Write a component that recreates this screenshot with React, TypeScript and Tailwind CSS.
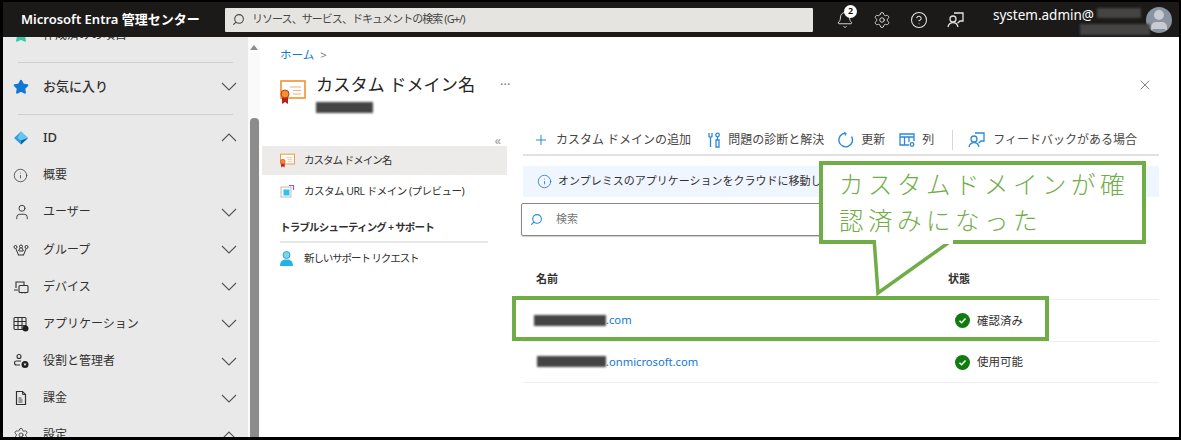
import { Bell, CircleHelp, Info, Plus, Search, Settings, Star, User, X } from "lucide-react";
import type { ReactNode } from "react";

const GREEN = "border-[#70ad47]";

function Cert({ size }: { size: number }) {
  return (
    <svg width={size} height={size} viewBox="0 0 26 26" className="shrink-0">
      <rect x="1" y="2" width="24" height="17" fill="#fff" stroke="#f2912e" strokeWidth="1.6" />
      <path d="M10 8h11M13 11.5h8M13 15h8" stroke="#f2b27a" strokeWidth="1.2" />
      <path d="M2 18v7l3-2 3 2v-7z" fill="#b3201d" />
      <circle cx="5" cy="15" r="4" fill="#f2912e" stroke="#c8391f" strokeWidth="1" />
    </svg>
  );
}

function Feedback({ color, size = 18 }: { color: string; size?: number }) {
  return (
    <svg width={size} height={size} viewBox="0 0 18 18" fill="none" stroke={color} strokeWidth="1.3" className="shrink-0">
      <path d="M7 2h9v8h-3l-2.5 2.2" />
      <circle cx="6" cy="8" r="3" />
      <path d="M1 16c.6-3 2.4-4.4 5-4.4s4.400 1.400 5 4.400" />
    </svg>
  );
}

function Chevron({ up }: { up?: boolean }) {
  return (
    <svg width="16" height="9" viewBox="0 0 16 9" fill="none" stroke="#555" strokeWidth="1.100" className="shrink-0">
      <path d={up ? "M1 8l7-7 7 7" : "M1 1l7 7 7-7"} />
    </svg>
  );
}

function IdIcon() {
  return (
    <svg width="16" height="16" viewBox="0 0 16 16">
      <path d="M8 1.500 1 8l7 6.500L15 8z" fill="#2f9fe0" />
      <path d="M8 1.500 4.500 8 8 10.500 15 8z" fill="#66c6f2" />
      <path d="M8 10.500v4L15 8z" fill="#14629e" />
    </svg>
  );
}

function GroupIcon() {
  return (
    <svg width="16" height="16" viewBox="0 0 16 16" fill="none" stroke="#323130" strokeWidth="1">
      <circle cx="2.500" cy="5" r="1.500" />
      <circle cx="13.500" cy="5" r="1.500" />
      <circle cx="8" cy="4.500" r="1.500" />
      <path d="M3 7l2.500 6M13 7l-2.500 6M6 9h4M5 13h6M7 6 5.500 9M9 6l1.500 3" />
    </svg>
  );
}

function DeviceIcon() {
  return (
    <svg width="16" height="16" viewBox="0 0 16 16" fill="none" stroke="#323130" strokeWidth="1.100">
      <path d="M3 9V3h8v3M1 11h4" />
      <rect x="6" y="6.500" width="9" height="7" rx="1" />
      <path d="M9 13.500v1M12 13.500v1" />
    </svg>
  );
}

function AppIcon() {
  return (
    <svg width="16" height="16" viewBox="0 0 16 16" fill="none" stroke="#323130" strokeWidth="1.100">
      <rect x="1" y="1.500" width="12" height="12" rx="1" />
      <path d="M1 5.500h12M1 9.500h12M5 1.500v12M9 1.500v12" />
      <circle cx="12.500" cy="12.500" r="3" fill="#201f1e" stroke="none" />
    </svg>
  );
}

function RoleIcon() {
  return (
    <svg width="16" height="16" viewBox="0 0 16 16" fill="none" stroke="#323130" strokeWidth="1.100">
      <circle cx="6" cy="3.500" r="2" />
      <path d="M8 8H3.500a1.800 1.800 0 0 0 0 4H7" />
      <circle cx="12" cy="11.500" r="3.500" fill="#201f1e" stroke="none" />
      <path d="M10.500 10.500h3L12 13z" fill="#e9e9e9" stroke="none" />
    </svg>
  );
}

function BillIcon() {
  return (
    <svg width="16" height="16" viewBox="0 0 16 16" fill="none" stroke="#323130" strokeWidth="1.200">
      <path d="M3.500 1.500h6l3 3v10h-9z" />
      <path d="M9.500 1.500v3h3M5.500 8h3M5.500 10h4M5.500 12h4" strokeWidth="0.900" />
    </svg>
  );
}

function Refresh() {
  return (
    <svg width="16" height="16" viewBox="0 0 16 16" fill="none" stroke="#2b88d8" strokeWidth="1.400" className="shrink-0">
      <path d="M7.500 1.200A6.800 6.800 0 1 0 13.500 4.500" />
      <path d="M6 .5 8 1.500 7 3.500" strokeWidth="1.100" />
    </svg>
  );
}

function ColumnsIcon() {
  return (
    <svg width="16" height="16" viewBox="0 0 16 16" fill="none" stroke="#2b88d8" strokeWidth="1.300" className="shrink-0">
      <path d="M10 13H1V2h14v7" />
      <path d="M1 5h14M5.500 5v8M10 5v5" />
      <circle cx="13" cy="12.500" r="1.800" />
    </svg>
  );
}

function Diagnose() {
  return (
    <svg width="14" height="16" viewBox="0 0 14 16" fill="none" stroke="#2b88d8" strokeWidth="1.300" className="shrink-0">
      <path d="M2 1v3.500a2 2 0 0 0 3 0V1M3.500 6v9" />
      <circle cx="10.500" cy="3" r="1.800" />
      <path d="M10.500 5v3M9 8h3v7H9z" />
    </svg>
  );
}

function CheckDot() {
  return (
    <svg width="15" height="15" viewBox="0 0 15 15" className="shrink-0">
      <circle cx="7.500" cy="7.500" r="7.500" fill="#107c10" />
      <path d="M4.500 7.800 6.600 9.800 10.500 5.500" fill="none" stroke="#fff" strokeWidth="1.500" />
    </svg>
  );
}

function Redacted({ className }: { className: string }) {
  return <span className={`block bg-[#444] blur-[1px] ${className}`} />;
}

function NavRow({ icon, label, chevron, bold }: { icon: ReactNode; label: string; chevron?: "up" | "down"; bold?: boolean }) {
  return (
    <div className="flex h-[37.2px] items-center pr-[11px] pl-[10px]">
      <div className="flex w-[30px] shrink-0 items-center">{icon}</div>
      <span className={`flex-1 ${bold ? "text-[13px] font-medium" : "text-[12px]"} text-[#323130]`}>{label}</span>
      {chevron && <Chevron up={chevron === "up"} />}
    </div>
  );
}

function ToolButton({ icon, label, className = "" }: { icon: ReactNode; label: string; className?: string }) {
  return (
    <div className={`flex items-center gap-[7px] text-[12px] text-[#484644] ${className}`}>
      {icon}
      <span className="whitespace-nowrap">{label}</span>
    </div>
  );
}

export default function App() {
  return (
    <div
      className="relative flex h-[440px] w-[1181px] flex-col overflow-hidden bg-black pt-[2px] pr-[2px] pb-[3px] pl-[3px]"
      style={{ fontFamily: '"Noto Sans", "Noto Sans CJK JP", sans-serif' }}
    >
      {/* top bar */}
      <header className="flex h-[35px] shrink-0 items-center bg-[#1b1a19] text-white">
        <div className="w-[222px] shrink-0 pl-[18px] text-[13px] font-semibold whitespace-nowrap">Microsoft Entra 管理センター</div>
        <div className="flex h-[24px] w-[588px] shrink-0 items-center gap-[7px] rounded-[1px] bg-[#e6e4e1] pl-[7px] text-[11px] tracking-[-0.950px] text-[#484644]">
          <Search size={13} className="-scale-x-100" />
          <span>リソース、サービス、ドキュメントの検索 (G+/)</span>
        </div>
        <div className="ml-[23px] flex w-[135px] shrink-0 items-center gap-[19px] text-[#e6e4e1]">
          <div className="relative">
            <Bell size={18} strokeWidth={1.200} />
            <span className="absolute -top-[6px] left-[8px] flex h-[13px] w-[13px] items-center justify-center rounded-full bg-white text-[9px] font-semibold text-black">2</span>
          </div>
          <Settings size={18} strokeWidth={1.200} />
          <CircleHelp size={18} strokeWidth={1.400} />
          <Feedback color="#e6e4e1" />
        </div>
        <div className="relative h-full flex-1">
          <span className="absolute top-[3px] left-[22px] text-[13.500px] whitespace-nowrap">system.admin@</span>
          <Redacted className="absolute top-[6px] left-[126px] h-[10px] w-[44px]" />
          <Redacted className="absolute top-[22px] left-[109px] h-[11px] w-[70px]" />
        </div>
        <div className="mr-[7px] flex h-[26px] w-[26px] shrink-0 items-center justify-center overflow-hidden rounded-full bg-[#8a93a0]">
          <User size={24} fill="#c8ccd2" stroke="#c8ccd2" />
        </div>
      </header>

      <div className="flex min-h-0 flex-1 bg-white">
        {/* portal menu */}
        <aside className="w-[245px] shrink-0 overflow-hidden bg-[#e9e9e9]">
          <div className="-mt-[21px]">
            <NavRow icon={<Star size={16} fill="#36c9a7" stroke="#36c9a7" />} label="作成済みの項目" />
          </div>
          <div className="mt-[9px] mr-[15px] ml-[15px] h-px bg-[#cfcfcf]" />
          <div className="mt-[5px]">
            <NavRow icon={<Star size={16} fill="#0f78d4" stroke="#0f78d4" />} label="お気に入り" chevron="down" bold />
          </div>
          <div className="mt-[9px] mr-[15px] ml-[15px] h-px bg-[#cfcfcf]" />
          <div className="mt-[4px]">
            <NavRow icon={<IdIcon />} label="ID" chevron="up" bold />
            <NavRow icon={<Info size={15} strokeWidth={1.200} className="text-[#323130]" />} label="概要" />
            <NavRow icon={<User size={18} strokeWidth={1.200} className="text-[#323130]" />} label="ユーザー" chevron="down" />
            <NavRow icon={<GroupIcon />} label="グループ" chevron="down" />
            <NavRow icon={<DeviceIcon />} label="デバイス" chevron="down" />
            <NavRow icon={<AppIcon />} label="アプリケーション" chevron="down" />
            <NavRow icon={<RoleIcon />} label="役割と管理者" chevron="down" />
            <NavRow icon={<BillIcon />} label="課金" chevron="down" />
            <NavRow icon={<Settings size={16} strokeWidth={1.200} className="text-[#323130]" />} label="設定" chevron="up" />
          </div>
        </aside>

        {/* scrollbar */}
        <div className="flex w-[12px] shrink-0 flex-col items-center bg-[#fafafa]">
          <div className="mt-[8px] h-0 w-0 border-x-[4px] border-b-[5px] border-x-transparent border-b-[#8c8c8c]" />
          <div className="mt-[68px] w-[9px] flex-1 rounded-t-[4px] bg-[#8c8c8c]" />
        </div>

        <main className="min-w-0 flex-1">
          <div className="flex h-[35px] items-center gap-[6px] pt-[1px] pl-[20px] text-[11.500px] text-[#0f78d4]">
            ホーム
            <span className="text-[#777]">&gt;</span>
          </div>
          <div className="flex items-start pr-[26px] pl-[20px]">
            <div className="mt-[7px] w-[36px] shrink-0">
              <Cert size={26} />
            </div>
            <div className="w-[184px] shrink-0">
              <div className="text-[17.200px] leading-[26px] whitespace-nowrap text-[#252423]">カスタム ドメイン名</div>
              <Redacted className="mt-[4px] h-[11px] w-[57px]" />
            </div>
            <span className="pt-[2px] text-[13px] leading-[20px] text-[#777]">···</span>
            <X size={16} strokeWidth={1} className="mt-[5px] ml-auto text-[#444]" />
          </div>

          <div className="mt-[21px] flex">
            {/* blade menu */}
            <div className="relative w-[247px] shrink-0 pl-[2px]">
              <div className="h-[12px] pr-[6px] text-right text-[13px] leading-[13px] text-[#999]">«</div>
              <div className="flex h-[29px] items-center gap-[9px] bg-[#edebe9] pl-[18px] text-[10.500px] tracking-[-1px] text-[#323130]">
                <Cert size={15} />
                カスタム ドメイン名
              </div>
              <div className="flex h-[33px] items-center gap-[9px] pl-[18px] text-[10.500px] tracking-[-0.5px] whitespace-nowrap text-[#323130]">
                <svg width="15" height="15" viewBox="0 0 15 15" className="shrink-0">
                  <rect x="1" y="3" width="10" height="10" fill="#fff" stroke="#bbb" />
                  <rect x="3.500" y="5.500" width="6" height="6" fill="#2ac4ee" />
                  <path d="M9 1.500h4.500V6" fill="none" stroke="#8a5cd6" strokeWidth="1.200" />
                </svg>
                カスタム URL ドメイン (プレビュー)
              </div>
              <div className="mt-[12px] ml-[18px] w-[208px] border-b-2 border-[#e6e6e6] pb-[5px] text-[10.500px] font-semibold tracking-[-0.8px] whitespace-nowrap text-[#323130]">
                トラブルシューティング + サポート
              </div>
              <div className="mt-[6px] flex h-[20px] items-center gap-[11px] pl-[18px] text-[10.500px] tracking-[-1.100px] whitespace-nowrap text-[#323130]">
                <svg width="13" height="15" viewBox="0 0 13 15" className="shrink-0">
                  <circle cx="6.500" cy="4" r="3.500" fill="#7dd3ea" stroke="#1b93c7" strokeWidth="0.800" />
                  <path d="M0 15c0-5 2.500-6.500 6.500-6.500S13 10 13 15z" fill="#20b5e3" />
                </svg>
                新しいサポート リクエスト
              </div>
            </div>

            {/* content */}
            <div className="min-w-0 flex-1 pr-[20px] pl-[16px]">
              <div className="-mt-[6px] flex h-[28px] items-center border-b-2 border-[#e1e1e1] pb-[2px] pl-[10px]">
                <ToolButton icon={<Plus size={16} strokeWidth={1.500} className="text-[#2b88d8]" />} label="カスタム ドメインの追加" className="gap-[6px]" />
                <ToolButton icon={<Diagnose />} label="問題の診断と解決" className="ml-[16px]" />
                <ToolButton icon={<Refresh />} label="更新" className="ml-[14px]" />
                <ToolButton icon={<ColumnsIcon />} label="列" className="ml-[14px]" />
                <div className="mr-[15px] ml-[18px] h-[20px] w-px bg-[#d8d8d8]" />
                <ToolButton icon={<Feedback color="#2b88d8" />} label="フィードバックがある場合" className="gap-[5px]" />
              </div>
              <div className="mt-[10px] flex h-[31px] items-center gap-[6px] bg-[#f0f6ff] pl-[14px] text-[11px] whitespace-nowrap text-[#323130]">
                <Info size={15} strokeWidth={1.300} className="text-[#2b6fd4]" />
                オンプレミスのアプリケーションをクラウドに移動し
              </div>
              <div className="mt-[6px] -ml-[2px] flex h-[33px] w-[320px] items-center gap-[13px] rounded-[2px] border border-[#8a8886] pl-[8px] text-[11px] text-[#777] shadow-[0_1px_1px_rgba(0,0,0,0.2)]">
                <Search size={13} className="-scale-x-100 text-[#2b88d8]" />
                検索
              </div>
              {/* domain table */}
              <div className="mt-[35px] flex h-[28px] items-start pl-[13px] text-[11px] font-semibold text-[#323130]">
                <div className="w-[412px]">名前</div>
                <div>状態</div>
              </div>
              <div className="flex h-[42px] items-center border-t border-[#efefef] pl-[11px] text-[11.200px] text-[#0f78d4]">
                <div className="flex w-[421px] items-center">
                  <Redacted className="h-[11px] w-[72px]" />
                  .com
                </div>
                <div className="flex items-center gap-[7px] text-[11.500px] text-[#323130]">
                  <CheckDot />
                  確認済み
                </div>
              </div>
              <div className="flex h-[42px] items-center border-y border-[#efefef] pl-[14px] text-[11.200px] text-[#0f78d4]">
                <div className="flex w-[418px] items-center">
                  <Redacted className="h-[11px] w-[69px]" />
                  .onmicrosoft.com
                </div>
                <div className="flex items-center gap-[7px] text-[11.500px] text-[#323130]">
                  <CheckDot />
                  使用可能
                </div>
              </div>
            </div>
          </div>
        </main>
      </div>

      {/* annotation overlay */}
      <div className={`absolute top-[296px] left-[512px] h-[45px] w-[537px] border-4 ${GREEN}`} />
      <svg width="100" height="60" viewBox="0 0 100 60" className="absolute top-[238px] left-[865px]">
        <path d="M9 0 13 55 90 0" fill="#fff" stroke="#70ad47" strokeWidth="3.500" />
      </svg>
      <div className={`absolute top-[161px] left-[819px] h-[83px] w-[327px] border-4 ${GREEN} border-b-0 bg-white`} />
      <div className="absolute top-[240px] left-[819px] h-[4px] w-[57px] bg-[#70ad47]" />
      <div className="absolute top-[240px] left-[953px] h-[4px] w-[193px] bg-[#70ad47]" />
      <div className="absolute top-[167px] left-[839px] w-[300px] text-[24.500px] leading-[36px] font-light tracking-[4.500px] text-[#70ad47]">
        カスタムドメインが確
        <br />
        認済みになった
      </div>
    </div>
  );
}
